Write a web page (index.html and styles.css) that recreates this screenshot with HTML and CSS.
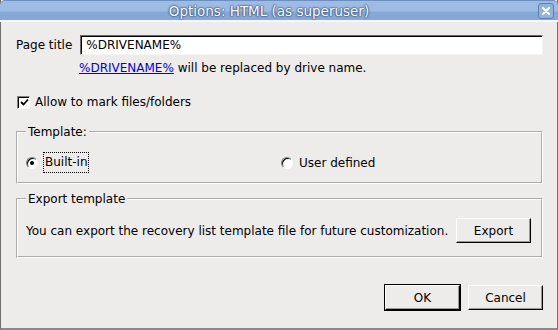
FILE: index.html
```html
<!DOCTYPE html>
<html>
<head>
<meta charset="utf-8">
<link rel="stylesheet" href="styles.css">
</head>
<body>
<div class="window">
  <div class="titlebar">
    <span class="title">Options: HTML (as superuser)</span>
    <span class="close">
      <svg width="16" height="16" viewBox="0 0 16 16"><path d="M4.5 4.5 L11.5 11.5 M11.5 4.5 L4.5 11.5" stroke="#fff" stroke-width="2.4" stroke-linecap="round"/></svg>
    </span>
  </div>
  <div class="content">
    <div class="row-title">
      <span class="label">Page title</span>
      <div class="input">%DRIVENAME%</div>
    </div>
    <div class="hint"><a class="link" href="#">%DRIVENAME%</a> will be replaced by drive name.</div>
    <div class="check-row">
      <span class="checkbox">
        <svg width="9" height="9" viewBox="0 0 9 9"><path d="M1 4 L3.5 6.5 L8 1.5" stroke="#000" stroke-width="1.8" fill="none"/></svg>
      </span>
      <span>Allow to mark files/folders</span>
    </div>
    <fieldset class="group group-template">
      <legend>Template:</legend>
      <div class="radios">
        <div class="radio-item"><span class="radio checked"></span><span class="focus">Built-in</span></div>
        <div class="radio-item"><span class="radio"></span><span>User defined</span></div>
      </div>
    </fieldset>
    <fieldset class="group group-export">
      <legend>Export template</legend>
      <div class="export-row">
        <span>You can export the recovery list template file for future customization.</span>
        <span class="btn btn-export">Export</span>
      </div>
    </fieldset>
    <div class="buttons">
      <span class="btn btn-default">OK</span>
      <span class="btn">Cancel</span>
    </div>
  </div>
</div>
</body>
</html>
```

FILE: styles.css
```css
html, body {
  margin: 0;
  padding: 0;
}
body {
  width: 558px;
  height: 330px;
  overflow: hidden;
  font-family: "DejaVu Sans", sans-serif;
  font-size: 12px;
  color: #000;
  background: #edecea;
}
.window {
  box-sizing: border-box;
  width: 558px;
  height: 330px;
  background: #edecea;
  border-left: 1px solid #707070;
  border-right: 1px solid #707070;
  border-bottom: 2px solid #8a8a8a;
  display: flex;
  flex-direction: column;
}
.titlebar {
  height: 22px;
  box-sizing: border-box;
  background: linear-gradient(to bottom, #9dbbe3 0, #9dbbe3 10px, #86a8d6 11px, #86a8d6 100%);
  border-bottom: 2px solid #f4f7fb;
  border-top: 1px solid #6d8fc0;
  border-radius: 5px 5px 0 0;
  margin-left: -1px;
  margin-right: -1px;
  padding-right: 20px;
  display: flex;
  align-items: center;
  justify-content: center;
  position: relative;
}
.title {
  color: #fff;
  font-size: 13.5px;
  text-shadow: 0 0 2px #2f4f82, 0 0 2px #2f4f82, 0 0 1px #2f4f82;
}
.close {
  position: absolute;
  right: 4px;
  top: 2px;
  width: 16px;
  height: 16px;
  box-sizing: border-box;
  border: 1px solid #5d7fb1;
  border-radius: 3px;
  background: #92b2de;
  display: flex;
  align-items: center;
  justify-content: center;
}
.close svg { display: block; }
.content {
  padding: 13px 14px 0 15px;
  display: flex;
  flex-direction: column;
}
.row-title {
  display: flex;
  align-items: center;
  gap: 8px;
}
.input {
  flex: 1;
  height: 20px;
  box-sizing: border-box;
  background: #fff;
  border-top: 1px solid #6a6a6a;
  border-left: 1px solid #6a6a6a;
  border-right: 1px solid #f5f5f5;
  border-bottom: 1px solid #f5f5f5;
  box-shadow: inset 1px 1px 0 #000;
  padding: 2px 5px;
  line-height: 15px;
}
.hint {
  margin-top: 6px;
  margin-left: 63px;
}
.link {
  color: #0000ee;
  text-decoration: underline;
}
.check-row {
  margin-top: 20px;
  display: flex;
  align-items: center;
  gap: 5px;
  margin-left: 1px;
}
.checkbox {
  width: 13px;
  height: 13px;
  box-sizing: border-box;
  background: #fff;
  border-top: 1px solid #808080;
  border-left: 1px solid #808080;
  border-right: 1px solid #fff;
  border-bottom: 1px solid #fff;
  box-shadow: inset 1px 1px 0 #000;
  display: flex;
  align-items: center;
  justify-content: center;
}
.checkbox svg { display: block; margin: 1px 0 0 1px; }
.group {
  margin: 0;
  border: 2px groove #fff;
  padding: 0 8px;
  min-width: 0;
}
.group legend {
  padding: 0 2px;
  margin-left: 0;
}
.group-template {
  margin-top: 16px;
  height: 59px;
  box-sizing: border-box;
}
.radios {
  display: flex;
  margin-top: 14px;
}
.radio-item {
  display: flex;
  align-items: center;
  gap: 6px;
  width: 257px;
}
.radio-item + .radio-item {
  margin-left: 3px;
}
.radio {
  width: 12px;
  height: 12px;
  box-sizing: border-box;
  border-radius: 50%;
  background: #fff;
  border: 1px solid;
  border-color: #808080 #fff #fff #808080;
  box-shadow: inset 1px 1px 0 #000;
  position: relative;
}
.radio.checked::after {
  content: "";
  position: absolute;
  left: 3px;
  top: 3px;
  width: 4px;
  height: 4px;
  border-radius: 50%;
  background: #000;
}
.focus {
  outline: 1px dotted #000;
  padding: 2px 1px 3px;
}
.group-export {
  margin-top: 8px;
  height: 66px;
  box-sizing: border-box;
}
.export-row {
  display: flex;
  align-items: center;
  justify-content: space-between;
  margin-top: 12px;
  padding-right: 2px;
}
.btn {
  display: inline-flex;
  align-items: center;
  justify-content: center;
  box-sizing: border-box;
  width: 75px;
  height: 25px;
  background: #edecea;
  border-top: 1px solid #fff;
  border-left: 1px solid #fff;
  border-right: 1px solid #000;
  border-bottom: 1px solid #000;
  box-shadow: inset -1px -1px 0 #9a9a9a;
}
.btn-default {
  outline: 1px solid #000;
}
.buttons {
  margin-top: 27px;
  display: flex;
  justify-content: flex-end;
  gap: 8px;
}
```
